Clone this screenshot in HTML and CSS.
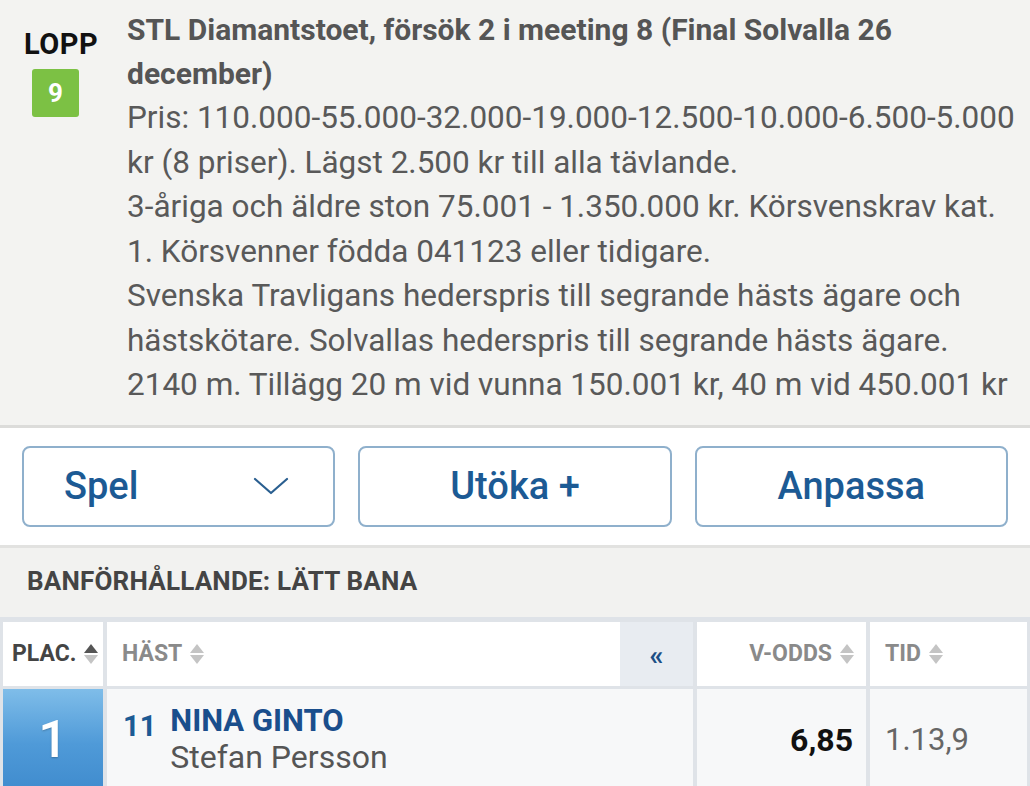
FILE: index.html
```html
<!DOCTYPE html>
<html lang="sv">
<head>
<meta charset="utf-8">
<link rel="stylesheet" href="styles.css">
</head>
<body>
<div class="page">
  <section class="race">
    <div class="race-id">
      <div class="lopp">LOPP</div>
      <div class="badge">9</div>
    </div>
    <div class="race-info">
      <h1 class="title">STL Diamantstoet, försök 2 i meeting 8 (Final Solvalla 26 december)</h1>
      <p class="desc">Pris: 110.000-55.000-32.000-19.000-12.500-10.000-6.500-5.000 kr (8 priser). Lägst 2.500 kr till alla tävlande.<br>3-åriga och äldre ston 75.001 - 1.350.000 kr. Körsvenskrav kat. 1. Körsvenner födda 041123 eller tidigare.<br>Svenska Travligans hederspris till segrande hästs ägare och hästskötare. Solvallas hederspris till segrande hästs ägare.<br>2140 m. Tillägg 20 m vid vunna 150.001 kr, 40 m vid 450.001 kr</p>
    </div>
  </section>
  <section class="actions">
    <button class="btn btn-spel"><span>Spel</span>
      <svg class="chev" width="36" height="20" viewBox="0 0 36 20"><path d="M2 3 L18 17 L34 3" fill="none" stroke="#2a5f90" stroke-width="2.2" stroke-linecap="round" stroke-linejoin="round"/></svg>
    </button>
    <button class="btn">Utöka +</button>
    <button class="btn">Anpassa</button>
  </section>
  <section class="track">BANFÖRHÅLLANDE: LÄTT BANA</section>
  <section class="results">
    <div class="hcell plac">PLAC. <span class="sort active"><i class="up"></i><i class="down"></i></span></div>
    <div class="hcell horse-h">
      <span class="hname">HÄST <span class="sort"><i class="up"></i><i class="down"></i></span></span>
      <span class="collapse">«</span>
    </div>
    <div class="hcell odds-h">V-ODDS <span class="sort"><i class="up"></i><i class="down"></i></span></div>
    <div class="hcell tid-h">TID <span class="sort"><i class="up"></i><i class="down"></i></span></div>

    <div class="cell place">1</div>
    <div class="cell horse">
      <span class="startno">11</span>
      <div class="names">
        <div class="hname-row">NINA GINTO</div>
        <div class="driver">Stefan Persson</div>
      </div>
    </div>
    <div class="cell odds">6,85</div>
    <div class="cell tid">1.13,9</div>
  </section>
</div>
</body>
</html>
```
FILE: styles.css
```css
* { box-sizing: border-box; }
html, body { margin: 0; padding: 0; }
body {
  font-family: Roboto, "Liberation Sans", sans-serif;
  background: #f3f3f1;
  width: 1030px;
  height: 786px;
  overflow: hidden;
}
.race {
  display: flex;
  padding: 8px 4px 17px 24px;
  background: #f3f3f1;
  border-bottom: 3px solid #dcdcda;
}
.race-id {
  width: 103px;
  flex: none;
  display: flex;
  flex-direction: column;
  padding-top: 22px;
}
.lopp {
  font-weight: 700;
  font-size: 29px;
  line-height: 28px;
  color: #111;
  letter-spacing: 0.5px;
}
.badge {
  margin-top: 11px;
  margin-left: 8px;
  width: 47px;
  height: 48px;
  background: #7cc144;
  border-radius: 3px;
  color: #fff;
  font-weight: 700;
  font-size: 26px;
  display: flex;
  align-items: center;
  justify-content: center;
}
.race-info { flex: 1; }
.title {
  margin: 0;
  font-size: 30px;
  line-height: 44px;
  font-weight: 700;
  color: #555;
}
.desc {
  margin: 0;
  font-size: 31.5px;
  line-height: 44.5px;
  color: #595959;
}
.actions {
  background: #fff;
  display: grid;
  grid-template-columns: repeat(3, 1fr);
  gap: 23px;
  padding: 18px 22px 18px 22px;
  border-bottom: 3px solid #e2e2e0;
}
.btn {
  height: 81px;
  background: #fff;
  border: 2px solid #8fb0cc;
  border-radius: 8px;
  font-family: Roboto, "Liberation Sans", sans-serif;
  font-size: 38px;
  font-weight: 500;
  color: #1c5a94;
  display: flex;
  align-items: center;
  justify-content: center;
  padding: 0;
}
.btn-spel {
  justify-content: space-between;
  padding: 0 44px 0 40px;
}
.track {
  height: 69px;
  background: #f2f2f0;
  padding: 18px 0 0 27px;
  font-size: 26px;
  font-weight: 700;
  color: #444;
  letter-spacing: 0.2px;
}
.results {
  display: grid;
  grid-template-columns: 100px 586px 169px 157px;
  grid-template-rows: 64px 110px;
  column-gap: 4px;
  row-gap: 3px;
  padding: 5px 3px 0 3px;
  background: #dfe3e8;
}
.hcell {
  background: #fff;
  display: flex;
  align-items: center;
  font-size: 23px;
  font-weight: 700;
  color: #8a8a8a;
}
.plac { color: #444; padding-left: 9px; gap: 8px; }
.horse-h { justify-content: space-between; padding-left: 15px; }
.hname { display: flex; align-items: center; gap: 8px; }
.collapse {
  width: 73px;
  align-self: stretch;
  background: #e8ecf1;
  color: #1c4f86;
  font-size: 28px;
  display: flex;
  align-items: center;
  justify-content: center;
  padding-top: 4px;
}
.odds-h { justify-content: flex-end; padding-right: 12px; gap: 8px; }
.tid-h { padding-left: 15px; gap: 8px; }
.sort {
  display: inline-flex;
  flex-direction: column;
  gap: 2px;
}
.sort i {
  display: block;
  width: 0;
  height: 0;
  border-left: 7px solid transparent;
  border-right: 7px solid transparent;
}
.sort .up { border-bottom: 9px solid #c4c4c4; }
.sort .down { border-top: 9px solid #c4c4c4; }
.sort.active .up { border-bottom-color: #555; }
.cell { background: #f7f8f9; }
.place {
  background: linear-gradient(to bottom, #7fbde9 0%, #4f9ad8 50%, #3d89cc 100%);
  color: #fff;
  font-size: 52px;
  font-weight: 500;
  display: flex;
  justify-content: center;
  padding-top: 20px;
  text-shadow: 0 1px 2px rgba(0,0,0,0.25);
}
.horse {
  display: flex;
  padding: 14px 0 0 16px;
  gap: 14px;
}
.startno {
  font-size: 29px;
  font-weight: 700;
  color: #1c5a94;
  padding-top: 6px;
}
.hname-row {
  font-size: 31px;
  font-weight: 700;
  color: #1a4e8c;
  line-height: 36px;
}
.driver {
  font-size: 32px;
  color: #555;
  line-height: 36px;
}
.odds {
  text-align: right;
  font-size: 32px;
  font-weight: 700;
  color: #111;
  padding: 32px 13px 0 0;
}
.tid {
  font-size: 31px;
  color: #666;
  padding: 32px 0 0 15px;
}
```
